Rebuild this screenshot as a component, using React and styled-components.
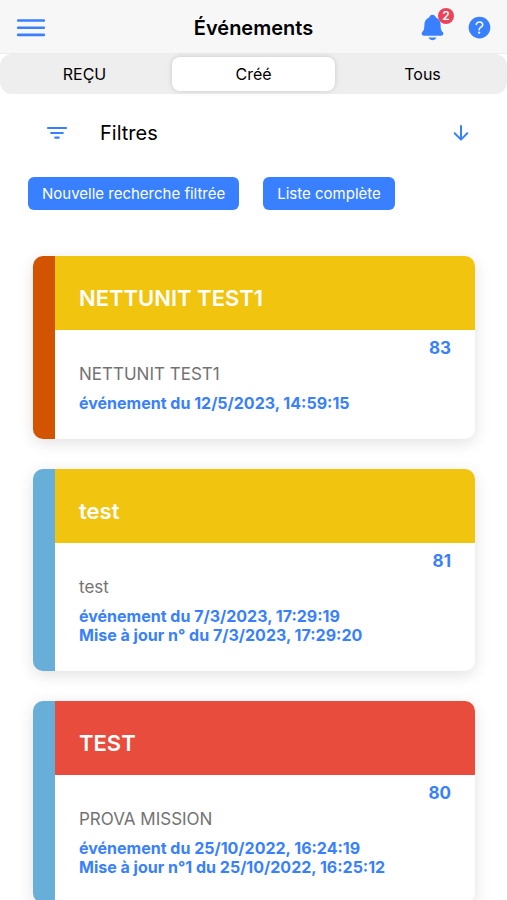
import React, { useState } from 'react';
import styled, { createGlobalStyle } from 'styled-components';
import { IoNotifications, IoHelpCircle } from 'react-icons/io5';

const GlobalStyle = createGlobalStyle`
    * {
        box-sizing: border-box;
    }

    body {
        margin: 0;
        background-color: #ffffff;
        color: #000000;
        font-family: Inter, 'Liberation Sans', sans-serif;
    }

    button {
        padding: 0;
        border: none;
        background: none;
        font-family: inherit;
        cursor: pointer;
    }
`;

const Page = styled.div`
    display: flex;
    flex-direction: column;
    height: 100vh;
`;

const Header = styled.header`
    display: grid;
    grid-template-columns: 1fr auto 1fr;
    align-items: center;
    flex-shrink: 0;
    height: 54px;
    padding: 2px 13px 0;
    background-color: #f7f7f7;
    border-bottom: 1px solid #ebebeb;
`;

const Title = styled.h1`
    margin: 0;
    font-size: 20px;
    font-weight: 600;
    line-height: 24px;
`;

const HeaderActions = styled.div`
    display: flex;
    align-items: center;
    justify-content: flex-end;
    gap: 18px;
`;

const IconButton = styled.button`
    position: relative;
    display: flex;
    justify-self: start;
    color: #3880ff;
`;

const Badge = styled.span`
    position: absolute;
    top: -5px;
    right: -7px;
    width: 16px;
    height: 16px;
    border-radius: 8px;
    background-color: #eb445a;
    color: #ffffff;
    font-size: 12px;
    font-weight: 600;
    line-height: 16px;
    text-align: center;
`;

const Segment = styled.div`
    display: grid;
    grid-template-columns: repeat(3, 1fr);
    flex-shrink: 0;
    height: 40px;
    padding: 3px 0;
    border-radius: 12px;
    background-color: #eeeeee;
`;

const SegmentButton = styled.button`
    margin: 0 3px;
    border-radius: 8px;
    background-color: ${({ $active }) => ($active ? '#ffffff' : 'transparent')};
    box-shadow: ${({ $active }) => ($active ? '0 0 5px rgba(0, 0, 0, 0.16)' : 'none')};
    color: #000000;
    font-size: 16px;
    line-height: 20px;
`;

const Content = styled.main`
    flex: 1;
    min-height: 0;
    overflow-y: auto;
    scrollbar-width: none;
`;

const FilterToggle = styled.button`
    display: flex;
    align-items: center;
    width: 100%;
    height: 78px;
    padding: 0 35px 0 46px;
    color: #3880ff;
`;

const FilterLabel = styled.span`
    flex: 1;
    margin-left: 32px;
    color: #000000;
    font-size: 20px;
    line-height: 24px;
    text-align: left;
`;

const FilterActions = styled.div`
    display: flex;
    gap: 24px;
    padding: 5px 28px 46px;
`;

const FilterButton = styled.button`
    height: 33px;
    padding: 0 14px;
    border-radius: 6px;
    background-color: #3880ff;
    color: #ffffff;
    font-size: 15px;
    line-height: 20px;
    white-space: nowrap;
`;

const EventList = styled.ul`
    display: flex;
    flex-direction: column;
    gap: 30px;
    margin: 0;
    padding: 0 32px 30px 33px;
    list-style: none;
`;

const EventCard = styled.li`
    overflow: hidden;
    border-left: 22px solid ${({ $stripe }) => $stripe};
    border-radius: 10px;
    background-color: #ffffff;
    box-shadow: 0 4px 16px rgba(0, 0, 0, 0.12);
`;

const EventTitle = styled.h2`
    margin: 0;
    padding: 28px 24px 18px;
    background-color: ${({ $color }) => $color};
    color: #ffffff;
    font-size: 22px;
    font-weight: 600;
    line-height: 28px;
`;

const EventBody = styled.div`
    padding: 8px 24px 26px;
`;

const EventNumber = styled.div`
    color: #3880ff;
    font-size: 17px;
    font-weight: 700;
    line-height: 20px;
    text-align: right;
`;

const EventName = styled.p`
    margin: 6px 0 10px;
    color: #737373;
    font-size: 17px;
    line-height: 20px;
`;

const EventDate = styled.div`
    color: #3880ff;
    font-size: 16px;
    font-weight: 700;
    line-height: 19px;
`;

const tabs = ['REÇU', 'Créé', 'Tous'];

const events = [
    {
        id: 83,
        title: 'NETTUNIT TEST1',
        name: 'NETTUNIT TEST1',
        stripe: '#d35400',
        color: '#f1c40f',
        dates: ['événement du 12/5/2023, 14:59:15']
    },
    {
        id: 81,
        title: 'test',
        name: 'test',
        stripe: '#67aed9',
        color: '#f1c40f',
        dates: ['événement du 7/3/2023, 17:29:19', 'Mise à jour n° du 7/3/2023, 17:29:20']
    },
    {
        id: 80,
        title: 'TEST',
        name: 'PROVA MISSION',
        stripe: '#67aed9',
        color: '#e74c3c',
        dates: ['événement du 25/10/2022, 16:24:19', 'Mise à jour n°1 du 25/10/2022, 16:25:12']
    }
];

const MenuIcon = () => (
    <svg width="34" height="27" viewBox="0 0 34 27" stroke="currentColor" strokeWidth="2.6" strokeLinecap="round">
        <path d="M5.2 6.5h25.6M5.2 13.7h25.6M5.2 20.9h25.6" />
    </svg>
);

const FilterIcon = () => (
    <svg width="22" height="22" viewBox="0 0 22 22" stroke="currentColor" strokeWidth="2.2" strokeLinecap="round">
        <path d="M2 6h18M5.2 11h11.6M9.3 15.7h3.4" />
    </svg>
);

const ArrowDownIcon = () => (
    <svg
        width="22"
        height="22"
        viewBox="0 0 22 22"
        fill="none"
        stroke="currentColor"
        strokeWidth="2"
        strokeLinecap="round"
        strokeLinejoin="round"
    >
        <path d="M4.7 11.3l6.3 6.3 6.3-6.3M11 17V4" />
    </svg>
);

const App = () => {
    const [activeTab, setActiveTab] = useState('Créé');
    const [filtersOpen, setFiltersOpen] = useState(true);

    return (
        <Page>
            <GlobalStyle />
            <Header>
                <IconButton aria-label="Menu">
                    <MenuIcon />
                </IconButton>
                <Title>Événements</Title>
                <HeaderActions>
                    <IconButton aria-label="Notifications">
                        <IoNotifications size={29} />
                        <Badge>2</Badge>
                    </IconButton>
                    <IconButton aria-label="Aide">
                        <IoHelpCircle size={29} />
                    </IconButton>
                </HeaderActions>
            </Header>
            <Segment role="tablist">
                {tabs.map((tab) => (
                    <SegmentButton
                        key={tab}
                        role="tab"
                        aria-selected={tab === activeTab}
                        $active={tab === activeTab}
                        onClick={() => setActiveTab(tab)}
                    >
                        {tab}
                    </SegmentButton>
                ))}
            </Segment>
            <Content>
                <FilterToggle aria-expanded={filtersOpen} onClick={() => setFiltersOpen(!filtersOpen)}>
                    <FilterIcon />
                    <FilterLabel>Filtres</FilterLabel>
                    <ArrowDownIcon />
                </FilterToggle>
                {filtersOpen && (
                    <FilterActions>
                        <FilterButton>Nouvelle recherche filtrée</FilterButton>
                        <FilterButton>Liste complète</FilterButton>
                    </FilterActions>
                )}
                <EventList>
                    {events.map((event) => (
                        <EventCard key={event.id} $stripe={event.stripe}>
                            <EventTitle $color={event.color}>{event.title}</EventTitle>
                            <EventBody>
                                <EventNumber>{event.id}</EventNumber>
                                <EventName>{event.name}</EventName>
                                {event.dates.map((date) => (
                                    <EventDate key={date}>{date}</EventDate>
                                ))}
                            </EventBody>
                        </EventCard>
                    ))}
                </EventList>
            </Content>
        </Page>
    );
};

export default App;
